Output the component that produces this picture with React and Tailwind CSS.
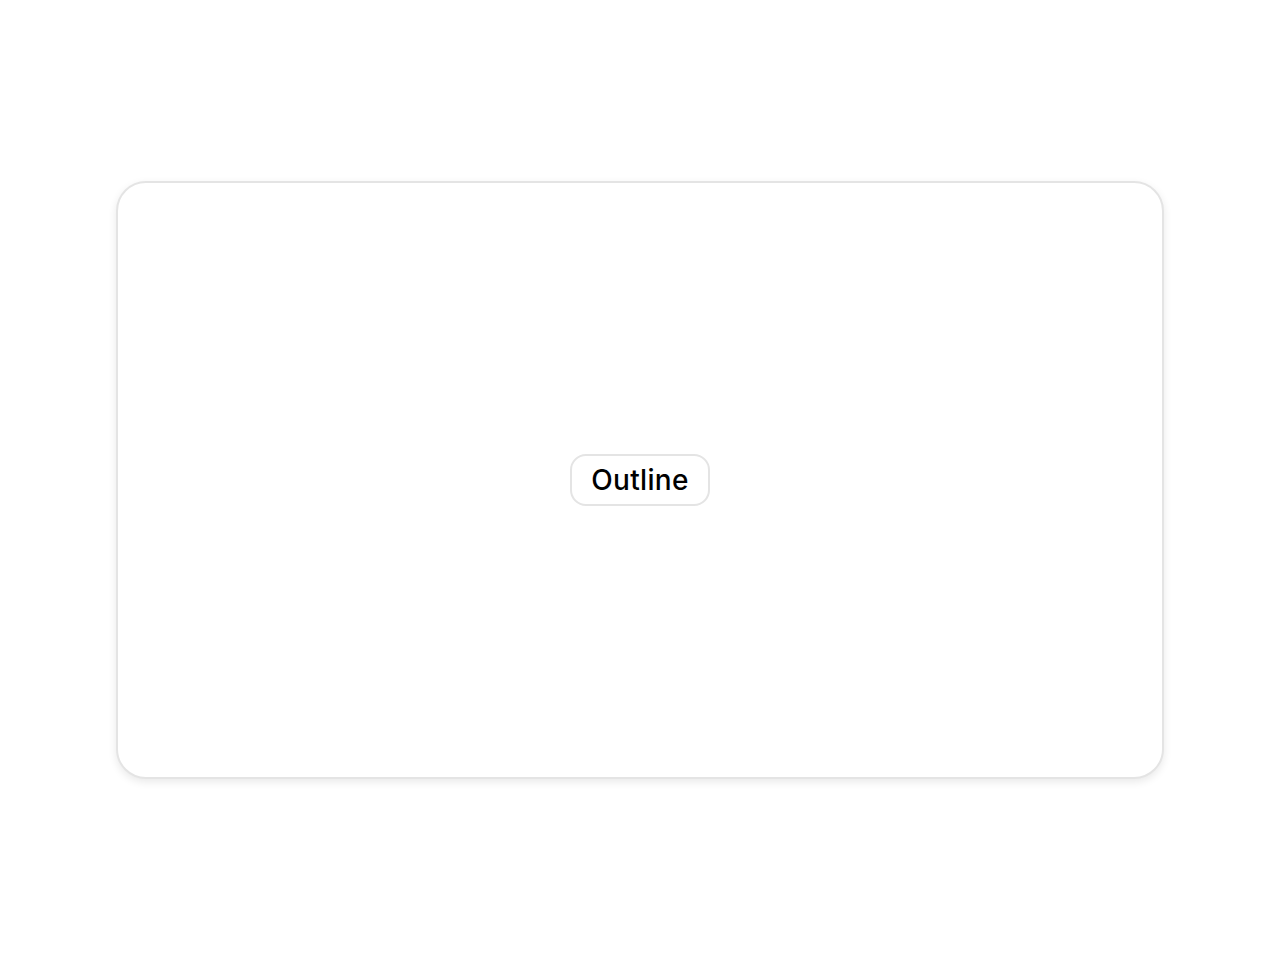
const App = () => {
  return (
    <div
      className="flex min-h-screen items-center justify-center bg-white"
      style={{ fontFamily: "Inter, 'Liberation Sans', sans-serif" }}
    >
      <div className="flex h-[598px] w-[1048px] items-center justify-center rounded-[30px] border-2 border-[#e4e4e4] bg-white shadow-[0_3px_8px_rgba(0,0,0,0.09)]">
        <button
          type="button"
          className="flex h-[52px] w-[140px] items-center justify-center rounded-[16px] border-2 border-[#e4e4e4] bg-white text-[28px] font-medium tracking-[0.3px] text-black"
        >
          Outline
        </button>
      </div>
    </div>
  );
};

export default App;
